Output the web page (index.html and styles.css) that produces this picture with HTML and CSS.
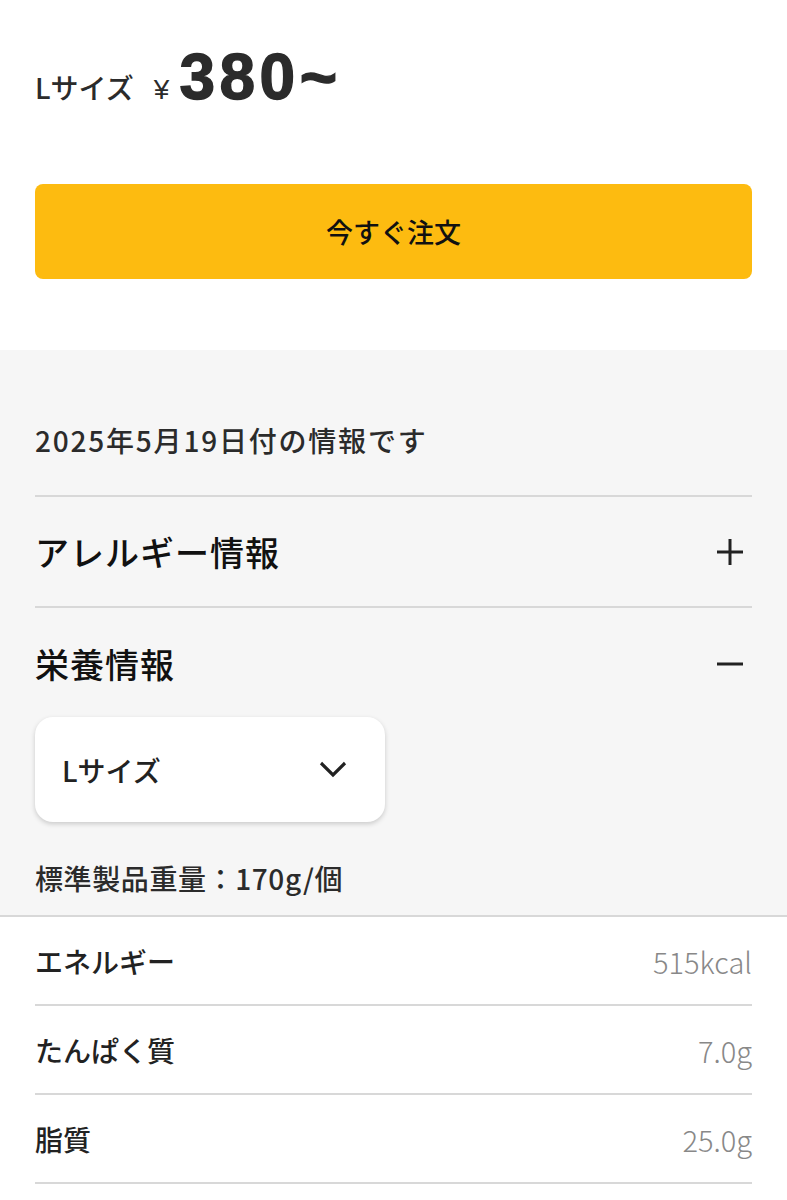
FILE: index.html
```html
<!DOCTYPE html>
<html lang="ja">
<head>
<meta charset="utf-8">
<link rel="stylesheet" href="styles.css">
</head>
<body>
<section class="top">
  <div class="price">
    <span class="size">Lサイズ</span>
    <span class="yen">¥</span>
    <span class="amount">380~</span>
  </div>
  <button class="order">今すぐ注文</button>
</section>
<section class="info">
  <p class="date">2025年5月19日付の情報です</p>
  <div class="acc">
    <h2>アレルギー情報</h2>
    <svg class="icon" width="26" height="26" viewBox="0 0 26 26"><path d="M13 0V26M0 13H26" stroke="#222" stroke-width="3"/></svg>
  </div>
  <div class="acc open">
    <h2>栄養情報</h2>
    <svg class="icon" width="26" height="26" viewBox="0 0 26 26"><path d="M0 13H26" stroke="#222" stroke-width="3"/></svg>
  </div>
  <div class="select">
    <span>Lサイズ</span>
    <svg width="28" height="18" viewBox="0 0 28 18"><path d="M2 2L14 14L26 2" fill="none" stroke="#222" stroke-width="3.2"/></svg>
  </div>
  <p class="weight">標準製品重量：170g/個</p>
</section>
<section class="table">
  <div class="row"><span class="label">エネルギー</span><span class="val">515kcal</span></div>
  <div class="row"><span class="label">たんぱく質</span><span class="val">7.0g</span></div>
  <div class="row"><span class="label">脂質</span><span class="val">25.0g</span></div>
</section>
</body>
</html>
```
FILE: styles.css
```css
* { box-sizing: border-box; }
html, body { margin: 0; padding: 0; background: #fff; }
body {
  font-family: "Noto Sans CJK JP", "Noto Sans", sans-serif;
  color: #2b2b2b;
}
.top {
  padding: 40px 35px 71px;
}
.price {
  display: flex;
  align-items: baseline;
  height: 76px;
}
.size {
  font-family: "Noto Sans CJK JP", sans-serif;
  font-size: 28px;
  font-weight: 500;
  color: #2b2b2b;
}
.yen {
  font-family: "Liberation Sans", sans-serif;
  font-size: 28px;
  margin-left: 20px;
  margin-right: 10px;
}
.amount {
  font-family: "Liberation Sans", sans-serif;
  font-weight: bold;
  font-size: 64px;
  letter-spacing: 4.5px;
  -webkit-text-stroke: 1.4px #2b2b2b;
  color: #2b2b2b;
}
.order {
  display: block;
  width: 100%;
  height: 95px;
  margin-top: 68px;
  border: none;
  border-radius: 8px;
  background: #fdbb10;
  font-family: "Noto Sans CJK JP", sans-serif;
  font-weight: 500;
  font-size: 27px;
  color: #111;
}
.info {
  background: #f6f6f6;
  padding: 0 35px;
}
.date {
  margin: 0;
  padding: 70px 0 35px;
  font-size: 28px;
  font-weight: 500;
  line-height: 40px;
  letter-spacing: 1.8px;
  border-bottom: 2px solid #d8d8d8;
}
.acc {
  display: flex;
  justify-content: space-between;
  align-items: center;
  height: 111px;
  border-bottom: 2px solid #d8d8d8;
}
.acc.open { border-bottom: none; height: 109px; padding-top: 2px; }
.acc h2 {
  margin: 0;
  font-size: 34px;
  font-weight: 500;
  color: #111;
  letter-spacing: 1px;
}
.icon { margin-right: 9px; }
.select {
  width: 350px;
  height: 105px;
  background: #fff;
  border-radius: 18px;
  box-shadow: 0 2px 5px rgba(0,0,0,0.18);
  display: flex;
  justify-content: space-between;
  align-items: center;
  padding: 0 38px 0 27px;
  font-size: 28px;
  font-weight: 500;
  color: #222;
}
.weight {
  margin: 0;
  padding: 36px 0 17px;
  font-size: 28px;
  font-weight: 500;
  line-height: 40px;
  letter-spacing: 0.6px;
}
.table {
  border-top: 2px solid #d8d8d8;
  padding: 0 35px;
  background: #fff;
}
.row {
  display: flex;
  justify-content: space-between;
  align-items: center;
  height: 89px;
  border-bottom: 2px solid #d8d8d8;
}
.label {
  font-size: 28px;
  font-weight: 500;
  color: #222;
}
.val {
  font-size: 29px;
  font-weight: 300;
  color: #888;
}
```
